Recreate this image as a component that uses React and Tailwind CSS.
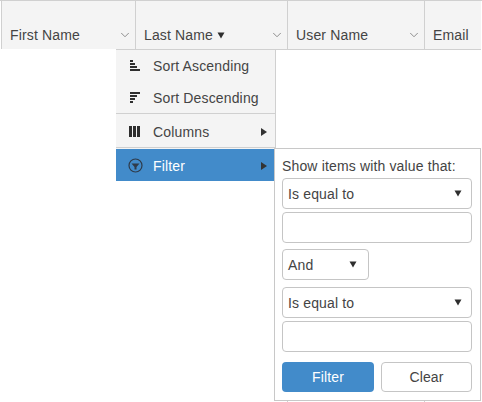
import { ChevronDown } from 'lucide-react'

const FONT = "font-['Liberation_Sans',Arial,sans-serif] tracking-[0.15px]"

function Caret({ className = '' }) {
  return (
    <svg width="8" height="7" viewBox="0 0 8 7" className={className}>
      <path d="M0.5 0.5h7L4 6.5z" fill="#2e2e2e" />
    </svg>
  )
}

function RightCaret() {
  return (
    <svg width="6" height="8" viewBox="0 0 6 8">
      <path d="M0 0l6 4-6 4z" fill="#333" />
    </svg>
  )
}

function HeaderCell({ label, width, sorted, chevron = true, className = '' }) {
  return (
    <div
      className={`flex shrink-0 items-end border-l border-[#d0d0d0] bg-[#f4f4f4] pb-[4px] pl-2 pr-[3px] ${className}`}
      style={{ width }}
    >
      <span className="text-sm leading-5 text-[#444]">{label}</span>
      {sorted && <Caret className="mb-[6px] ml-1" />}
      {chevron && (
        <ChevronDown size={14} strokeWidth={1.4} className="mb-[3px] ml-auto text-[#777]" />
      )}
    </div>
  )
}

function SortAscIcon() {
  return (
    <svg width="10" height="12" viewBox="0 0 10 12" fill="#2e2e2e">
      <rect x="0" y="0" width="3" height="2" />
      <rect x="0" y="3" width="5" height="2" />
      <rect x="0" y="6" width="7" height="2" />
      <rect x="0" y="9" width="10" height="2" />
    </svg>
  )
}

function SortDescIcon() {
  return (
    <svg width="10" height="12" viewBox="0 0 10 12" fill="#2e2e2e">
      <rect x="0" y="0" width="10" height="2" />
      <rect x="0" y="3" width="7" height="2" />
      <rect x="0" y="6" width="5" height="2" />
      <rect x="0" y="9" width="3" height="2" />
    </svg>
  )
}

function ColumnsIcon() {
  return (
    <svg width="12" height="11" viewBox="0 0 12 11" fill="#2e2e2e">
      <rect x="0" y="0" width="3" height="11" />
      <rect x="4" y="0" width="3" height="11" />
      <rect x="8" y="0" width="3" height="11" />
    </svg>
  )
}

function FilterIcon() {
  return (
    <svg width="15" height="15" viewBox="0 0 15 15">
      <circle cx="7.5" cy="7.5" r="6.5" fill="none" stroke="#2f3b4a" strokeWidth="1.2" />
      <path d="M3.5 5.5h8L8.5 9v2.5h-2V9z" fill="#2f3b4a" />
    </svg>
  )
}

function MenuItem({ icon, label, active, arrow, className = 'h-8' }) {
  return (
    <div className={`flex items-center pr-2 ${active ? 'bg-[#428bca] text-white' : 'text-[#444]'} ${className}`}>
      <div className="flex w-[37px] shrink-0 justify-center pl-[1px]">{icon}</div>
      <span className="text-sm leading-5">{label}</span>
      {arrow && <span className="ml-auto flex"><RightCaret /></span>}
    </div>
  )
}

function Select({ label, className = '' }) {
  return (
    <div className={`flex h-[31px] items-center justify-between rounded border border-[#c5c5c5] bg-white pl-[5px] text-sm text-[#444] ${className}`}>
      <span>{label}</span>
      <Caret />
    </div>
  )
}

function TextBox() {
  return <div className="h-[31px] rounded border border-[#c5c5c5] bg-white" />
}

export default function App() {
  return (
    <div className={`relative h-[402px] w-[482px] overflow-hidden bg-white ${FONT}`}>
      <div className="flex h-[50px] items-start border-t border-[#d0d0d0] pl-[1px]">
        <HeaderCell label="First Name" width={134} className="h-[48px]" />
        <HeaderCell label="Last Name" width={152} sorted className="h-[49px] border-b" />
        <HeaderCell label="User Name" width={137} className="h-[49px] border-b" />
        <HeaderCell label="Email" width={57} chevron={false} className="h-[49px] border-b" />
      </div>

      <div className="absolute left-[116px] top-[49px] w-[160px] border-r border-t border-[#d0d0d0] bg-[#f4f4f4]">
        <MenuItem icon={<SortAscIcon />} label="Sort Ascending" />
        <MenuItem icon={<SortDescIcon />} label="Sort Descending" className="h-[31px] pt-[1px]" />
        <div className="border-t border-[#d0d0d0]">
          <MenuItem icon={<ColumnsIcon />} label="Columns" arrow className="h-[33px] pt-[2px]" />
        </div>
        <div className="border-t border-[#d0d0d0] pt-[1px]">
          <MenuItem icon={<FilterIcon />} label="Filter" arrow active className="h-8 pt-[1px]" />
        </div>
      </div>

      {/* table row peeking out under the popup */}
      <div className="absolute left-[287px] top-[400px] h-[2px] w-[138px] border-x border-[#d0d0d0]" />

      <div className="absolute left-[274px] top-[148px] flex h-[253px] w-[207px] flex-col border border-[#c8c8c8] bg-white pl-[7px] pt-[9px]">
        <div className="text-sm leading-[16px] text-[#444]">Show items with value that:</div>
        <div className="mt-[4px] flex w-[190px] flex-col gap-[3px]">
          <Select label="Is equal to" className="pr-[9px]" />
          <TextBox />
        </div>
        <Select label="And" className="mt-[6px] w-[87px] pr-[11px]" />
        <div className="mt-[7px] flex w-[190px] flex-col gap-[3px]">
          <Select label="Is equal to" className="pr-[9px]" />
          <TextBox />
        </div>
        <div className="mt-[10px] flex gap-[7px]">
          <button className="h-[30px] w-[92px] rounded bg-[#428bca] text-sm text-white">Filter</button>
          <button className="h-[30px] w-[91px] rounded border border-[#c5c5c5] bg-white text-sm text-[#444]">Clear</button>
        </div>
      </div>
    </div>
  )
}
